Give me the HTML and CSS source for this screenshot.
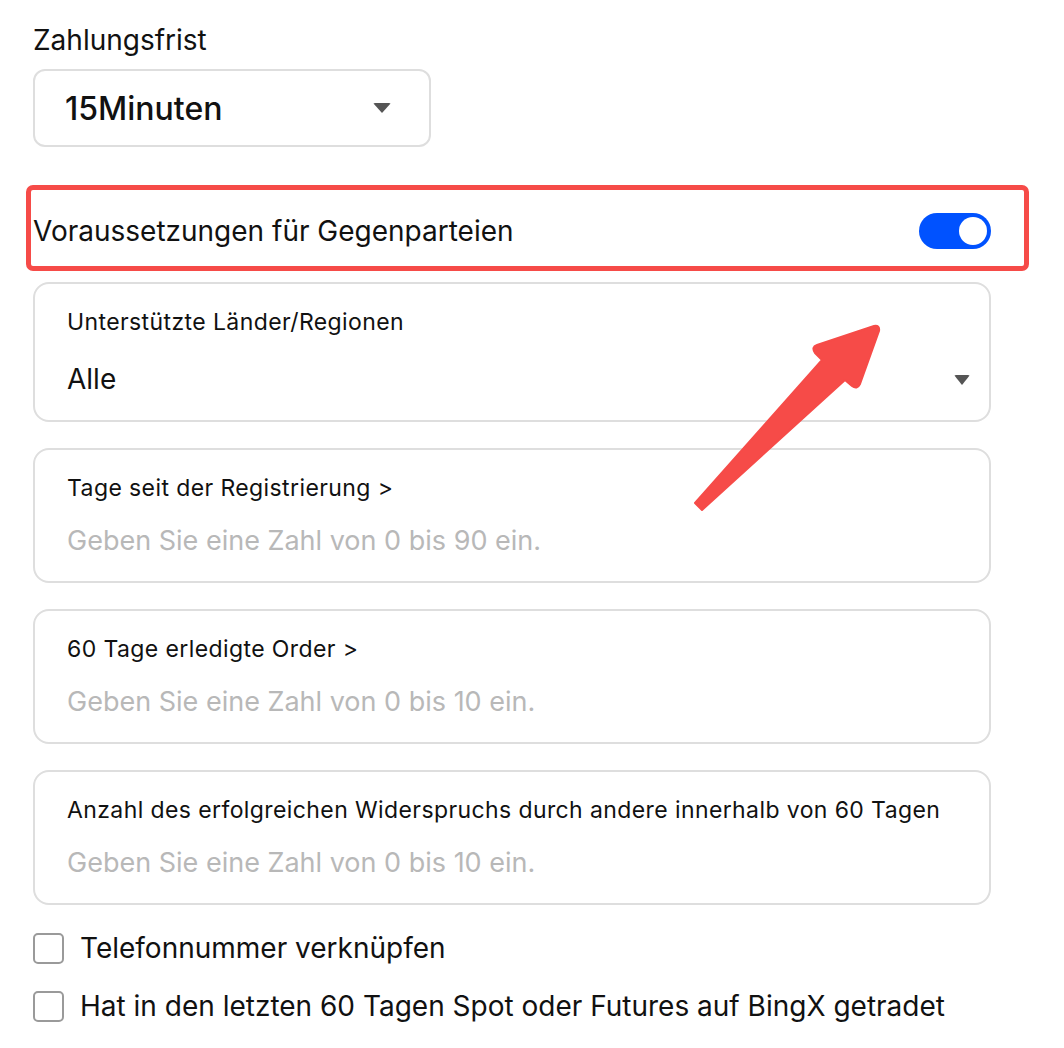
FILE: index.html
```html
<!DOCTYPE html>
<html lang="de">
<head>
<meta charset="utf-8">
<title>Gegenparteien</title>
<link rel="stylesheet" href="styles.css">
</head>
<body>
<main class="form">
  <div class="field-label">Zahlungsfrist</div>
  <div class="select">
    <span class="select-value">15Minuten</span>
    <span class="caret"></span>
  </div>

  <div class="toggle-row">
    <span class="toggle-text">Voraussetzungen für Gegenparteien</span>
    <span class="switch"><span class="knob"></span></span>
  </div>

  <div class="card">
    <div class="card-label">Unterstützte Länder/Regionen</div>
    <div class="card-row">
      <span class="card-value">Alle</span>
      <span class="caret small"></span>
    </div>
  </div>

  <div class="card">
    <div class="card-label">Tage seit der Registrierung &gt;</div>
    <div class="card-placeholder">Geben Sie eine Zahl von 0 bis 90 ein.</div>
  </div>

  <div class="card">
    <div class="card-label">60 Tage erledigte Order &gt;</div>
    <div class="card-placeholder">Geben Sie eine Zahl von 0 bis 10 ein.</div>
  </div>

  <div class="card">
    <div class="card-label">Anzahl des erfolgreichen Widerspruchs durch andere innerhalb von 60 Tagen</div>
    <div class="card-placeholder">Geben Sie eine Zahl von 0 bis 10 ein.</div>
  </div>

  <label class="check-row"><span class="box"></span><span>Telefonnummer verknüpfen</span></label>
  <label class="check-row"><span class="box"></span><span>Hat in den letzten 60 Tagen Spot oder Futures auf BingX getradet</span></label>

  <svg class="annot-arrow" width="1064" height="1048" viewBox="0 0 1064 1048" aria-hidden="true">
    <path d="M695 503 L822 360 L815 353 Q811 347 817 345 L874 326 Q880 325 879 331 L860 384 Q857 390 852 386 L845 380 L702 510 Z" fill="#f64b48" stroke="#f64b48" stroke-width="2" stroke-linejoin="round"/>
  </svg>
</main>
</body>
</html>
```

FILE: styles.css
```css
* { box-sizing: border-box; }
html, body { margin: 0; padding: 0; background: #fff; }
body {
  font-family: Inter, "Noto Sans", "Liberation Sans", sans-serif;
  color: #111;
}
.form {
  position: relative;
  width: 1064px;
  height: 1048px;
  padding: 22px 73px 0 33px;
  display: flex;
  flex-direction: column;
}
.field-label {
  font-size: 28px;
  line-height: 36px;
}
.select {
  margin-top: 11px;
  width: 398px;
  height: 78px;
  border: 2px solid #dedede;
  border-radius: 12px;
  display: flex;
  align-items: center;
  justify-content: space-between;
  padding: 0 38px 0 30px;
}
.select-value {
  font-size: 32px;
  font-weight: 500;
}
.caret {
  width: 0; height: 0;
  border-left: 9px solid transparent;
  border-right: 9px solid transparent;
  border-top: 10px solid #555;
  border-radius: 2px;
}
.toggle-row {
  position: relative;
  margin-top: 39px;
  height: 85px;
  display: flex;
  align-items: center;
  justify-content: space-between;
  padding-top: 4px;
}
.toggle-row::after {
  content: "";
  position: absolute;
  left: -7px; right: -38px; top: -1px; bottom: 0;
  border: 5px solid #f64b48;
  border-radius: 7px;
  pointer-events: none;
}
.toggle-text { font-size: 28px; }
.switch {
  width: 72px; height: 36px;
  border-radius: 18px;
  background: #0052ff;
  position: relative;
}
.knob {
  position: absolute;
  right: 4px; top: 4px;
  width: 28px; height: 28px;
  border-radius: 50%;
  background: #fff;
}
.card {
  margin-top: 26px;
  border: 2px solid #dedede;
  border-radius: 16px;
  padding: 22px 19px 0 32px;
  height: 135px;
}
.toggle-row + .card { margin-top: 11px; height: 140px; }
.card-label {
  font-size: 23px;
  letter-spacing: 0.4px;
  line-height: 32px;
}
.card-row {
  margin-top: 21px;
  display: flex;
  align-items: center;
  justify-content: space-between;
}
.card-value { font-size: 28px; line-height: 40px; }
.caret.small {
  border-left-width: 8px; border-right-width: 8px; border-top-width: 10px;
  margin-top: 1px;
}
.card-placeholder {
  margin-top: 17px;
  font-size: 27px;
  line-height: 40px;
  color: #b8b8b8;
}
.check-row {
  display: flex;
  align-items: center;
  gap: 16px;
  font-size: 28px;
  height: 58px;
}
.card + .check-row { margin-top: 14px; }
.box {
  width: 31px; height: 31px;
  border: 2px solid #9a9a9a;
  border-radius: 5px;
  flex: none;
}
.annot-arrow {
  position: absolute;
  left: 0; top: 0;
  pointer-events: none;
}
```
